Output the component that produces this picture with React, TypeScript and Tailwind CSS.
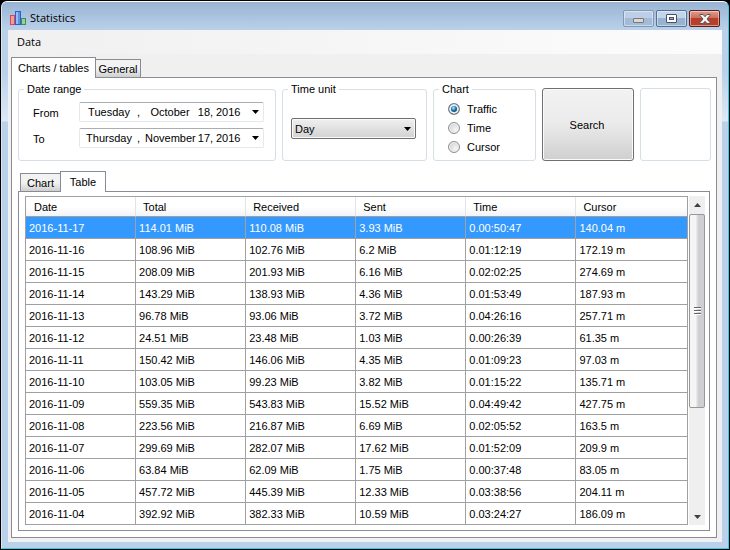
import { useState } from "react";
import type { ReactNode } from "react";

const columns = ["Date", "Total", "Received", "Sent", "Time", "Cursor"];

const rows = [
  ["2016-11-17", "114.01 MiB", "110.08 MiB", "3.93 MiB", "0.00:50:47", "140.04 m"],
  ["2016-11-16", "108.96 MiB", "102.76 MiB", "6.2 MiB", "0.01:12:19", "172.19 m"],
  ["2016-11-15", "208.09 MiB", "201.93 MiB", "6.16 MiB", "0.02:02:25", "274.69 m"],
  ["2016-11-14", "143.29 MiB", "138.93 MiB", "4.36 MiB", "0.01:53:49", "187.93 m"],
  ["2016-11-13", "96.78 MiB", "93.06 MiB", "3.72 MiB", "0.04:26:16", "257.71 m"],
  ["2016-11-12", "24.51 MiB", "23.48 MiB", "1.03 MiB", "0.00:26:39", "61.35 m"],
  ["2016-11-11", "150.42 MiB", "146.06 MiB", "4.35 MiB", "0.01:09:23", "97.03 m"],
  ["2016-11-10", "103.05 MiB", "99.23 MiB", "3.82 MiB", "0.01:15:22", "135.71 m"],
  ["2016-11-09", "559.35 MiB", "543.83 MiB", "15.52 MiB", "0.04:49:42", "427.75 m"],
  ["2016-11-08", "223.56 MiB", "216.87 MiB", "6.69 MiB", "0.02:05:52", "163.5 m"],
  ["2016-11-07", "299.69 MiB", "282.07 MiB", "17.62 MiB", "0.01:52:09", "209.9 m"],
  ["2016-11-06", "63.84 MiB", "62.09 MiB", "1.75 MiB", "0.00:37:48", "83.05 m"],
  ["2016-11-05", "457.72 MiB", "445.39 MiB", "12.33 MiB", "0.03:38:56", "204.11 m"],
  ["2016-11-04", "392.92 MiB", "382.33 MiB", "10.59 MiB", "0.03:24:27", "186.09 m"],
];

function AppIcon() {
  return (
    <svg width="16" height="16" viewBox="0 0 16 16" aria-hidden="true">
      <rect x="0.5" y="5.5" width="4" height="9" fill="#f59a9a" stroke="#e0454e" />
      <rect x="5.5" y="1.5" width="5" height="13" fill="#5c94ec" stroke="#2a62cc" />
      <rect x="6" y="2" width="2" height="12" fill="#94bcf6" />
      <rect x="11.5" y="8.5" width="4" height="6" fill="#94cf9c" stroke="#3f8f4e" />
    </svg>
  );
}

function Arrow({ className = "" }: { className?: string }) {
  return (
    <svg width="7" height="4" viewBox="0 0 7 4" className={className} aria-hidden="true">
      <path d="M0 0h7L3.5 4z" fill="currentColor" />
    </svg>
  );
}

function Group({ title, children }: { title: string; children: ReactNode }) {
  return (
    <fieldset className="h-[79px] min-w-0 rounded-[3px] border border-[#d5dfe5]">
      <legend className="ml-[5px] px-[3px] leading-[14px]">{title}</legend>
      {children}
    </fieldset>
  );
}

interface DateProps {
  id: string;
  label: string;
  weekday: string;
  month: string;
  day: string;
  year: string;
}

function DateRow({ id, label, weekday, month, day, year }: DateProps) {
  return (
    <div className="flex items-center pr-[11px] pl-[14px]">
      <label htmlFor={id} className="w-[46px] pt-px">
        {label}
      </label>
      <button
        id={id}
        type="button"
        className="flex h-5 flex-1 items-center rounded-[2px] border border-[#e3e9ef] border-t-[#abadb3] bg-white pr-[4px] pl-[5px] text-left"
      >
        <span className="w-12 text-center">{weekday}</span>
        <span className="w-3 pl-1">,</span>
        <span className="w-[50px] text-center">{month}</span>
        <span className="w-[21px] text-center">{day},</span>
        <span className="text-right">{year}</span>
        <Arrow className="ml-auto" />
      </button>
    </div>
  );
}

const inactiveTab =
  "h-[18px] border border-b-0 border-[#898c95] bg-linear-to-b from-[#f2f2f2] from-50% to-[#cfcfcf] pt-px leading-4";
const activeTab = "relative z-10 -mb-px border border-b-0 border-[#898c95] bg-white";

const radioClass =
  "size-3 appearance-none rounded-full border border-[#8e8f8f] bg-radial-[at_65%_65%] from-[#f6f6f6] to-[#c4c8cc] shadow-[inset_0_0_0_1px_#f4f4f4] checked:bg-radial-[at_45%_40%] checked:from-[#7fd3f5] checked:from-10% checked:via-[#1a6fae] checked:via-30% checked:to-[#0c2c4c] checked:to-60% checked:border-[#7a8084] checked:shadow-[inset_0_0_0_2px_#e8ecee]";

const captionButton =
  "grid h-[17px] place-items-center rounded-[2px] border shadow-[inset_0_0_0_1px_#ffffff70]";

export default function App() {
  const [unit, setUnit] = useState("Day");
  const [series, setSeries] = useState("Traffic");

  return (
    <div className="flex min-h-screen flex-col bg-black p-px font-['Liberation_Sans',Arial,sans-serif] text-[11px] leading-[14px] text-black">
      <div className="flex flex-1 flex-col rounded-t-[6px] border border-t-white border-r-[#2cd0e8] border-b-[#2cd0e8] border-l-[#d8e6f4] bg-[linear-gradient(to_bottom,#99b4d3_0px,#b9d1ea_28px,#b9d1ea_70px,#dce9f7_119px,#b9d1ea_120px)] px-[6px] pb-[6px]">
        <header className="flex h-7 items-start">
          <div className="flex items-center gap-1 pt-2 pl-[2px]">
            <AppIcon />
            <h1 className="font-['Open_Sans',sans-serif] text-[11px]">Statistics</h1>
          </div>
          <div className="ml-auto flex gap-[2px] pt-2 pr-[2px]">
            <button
              type="button"
              aria-label="Minimize"
              className={`${captionButton} w-[31px] border-[#8198b5] bg-linear-to-b from-[#bccfe6] from-50% to-[#a3bbd8] to-50%`}
            >
              <svg width="11" height="5" viewBox="0 0 11 5" className="mt-1">
                <rect x="0.5" y="0.5" width="10" height="4" rx="0.5" fill="#dcd9cd" stroke="#76767c" />
              </svg>
            </button>
            <button
              type="button"
              aria-label="Maximize"
              className={`${captionButton} w-[31px] border-[#56708f] bg-linear-to-b from-[#c3d5ea] from-50% to-[#98b3d2] to-50%`}
            >
              <svg width="11" height="9" viewBox="0 0 11 9">
                <rect x="0.5" y="0.5" width="10" height="8" rx="0.5" fill="#fff" stroke="#4a5064" />
                <rect x="3.5" y="3.5" width="4" height="2" fill="#8fb0dc" stroke="#4a5064" />
              </svg>
            </button>
            <button
              type="button"
              aria-label="Close"
              className={`${captionButton} w-[31px] border-[#5a1e1e] bg-linear-to-b from-[#dc9c8e] from-0% via-[#cc6a58] via-50% to-[#b8402a] to-50%`}
            >
              <svg width="12" height="10" viewBox="0 0 12 10">
                <path
                  d="M1 .5h3L6 2.700 8 .5h3v1L8 5l3 3.500v1H8L6 7.300 4 9.500H1v-1L4 5 1 1.500z"
                  fill="#f4f4f4"
                  stroke="#54545e"
                />
              </svg>
            </button>
          </div>
        </header>

        <main className="flex flex-1 flex-col bg-[#f0f0f0]">
          <nav className="h-6 bg-linear-to-r from-[#f0f0f0] to-[#fcfcfc] pl-[9px]">
            <button type="button" className="h-6 font-['Open_Sans',sans-serif] text-[11px]">
              Data
            </button>
          </nav>

          <div className="flex flex-1 flex-col px-[3px] pt-[3px] pb-1">
            <div role="tablist" className="flex items-end">
              <button
                type="button"
                role="tab"
                aria-selected="true"
                className={`${activeTab} h-[21px] w-[85px] whitespace-nowrap`}
              >
                Charts / tables
              </button>
              <button type="button" role="tab" aria-selected="false" className={`${inactiveTab} w-[45px] border-l-0`}>
                General
              </button>
            </div>

            <section className="mr-[2px] flex flex-1 flex-col border border-[#898c95] bg-white pt-1 pr-[5px] pb-[6px] pl-[6px]">
              <form
                className="grid grid-cols-[258fr_145fr_103fr_92fr_71fr] gap-[6px]"
                onSubmit={(e) => e.preventDefault()}
              >
                <Group title="Date range">
                  <div className="flex flex-col gap-[6px] pt-[6px]">
                    <DateRow id="from" label="From" weekday="Tuesday" month="October" day="18" year="2016" />
                    <DateRow id="to" label="To" weekday="Thursday" month="November" day="17" year="2016" />
                  </div>
                </Group>

                <Group title="Time unit">
                  <div className="relative mr-[10px] ml-2 mt-[22px]">
                    <select
                      aria-label="Time unit"
                      value={unit}
                      onChange={(e) => setUnit(e.target.value)}
                      className="h-[21px] w-full appearance-none rounded-[2px] border border-[#707070] bg-linear-to-b from-[#f0f0f0] to-[#d2d2d2] pl-[3px] shadow-[inset_0_0_0_1px_#fafafa]"
                    >
                      <option>Day</option>
                      <option>Week</option>
                      <option>Month</option>
                    </select>
                    <Arrow className="pointer-events-none absolute top-[9px] right-[5px]" />
                  </div>
                </Group>

                <Group title="Chart">
                  <div className="flex flex-col gap-[5px] pt-[6px] pl-[14px]">
                    {["Traffic", "Time", "Cursor"].map((name) => (
                      <label key={name} className="flex h-[14px] items-center gap-[7px]">
                        <input
                          type="radio"
                          name="series"
                          checked={series === name}
                          onChange={() => setSeries(name)}
                          className={radioClass}
                        />
                        {name}
                      </label>
                    ))}
                  </div>
                </Group>

                <button
                  type="submit"
                  className="mt-[6px] rounded-[3px] border border-[#707070] bg-linear-to-b from-[#f2f2f2] from-0% via-[#ebebeb] via-48% to-[#cfcfcf] pr-[2px] shadow-[inset_0_0_0_1px_#fafafa]"
                >
                  Search
                </button>

                <div className="mt-[6px] rounded-[3px] border border-[#d5dfe5]" />
              </form>

              <div role="tablist" className="mt-[10px] flex items-end pl-[2px]">
                <button type="button" role="tab" aria-selected="false" className={`${inactiveTab} w-10 border-r-0`}>
                  Chart
                </button>
                <button type="button" role="tab" aria-selected="true" className={`${activeTab} h-[21px] w-[46px]`}>
                  Table
                </button>
              </div>

              <section className="mr-px flex flex-1 items-stretch gap-px border border-[#898c95] pt-1 pr-1 pb-[5px] pl-[6px]">
                <div className="min-w-0 flex-1 border-t border-l border-[#a0a0a0]">
                  <table className="w-full table-fixed border-separate border-spacing-0">
                    <colgroup>
                      <col span={5} className="w-[16.63%]" />
                      <col />
                    </colgroup>
                    <thead>
                      <tr className="h-5">
                        {columns.map((name) => (
                          <th
                            key={name}
                            scope="col"
                            className="border-r border-b border-r-[#e2e3e5] border-b-[#a0a0a0] bg-linear-to-b from-white from-50% to-[#f2f3f5] p-0 pt-px pl-[7px] text-left font-normal first:pl-2 last:border-r-[#a0a0a0]"
                          >
                            {name}
                          </th>
                        ))}
                      </tr>
                    </thead>
                    <tbody>
                      {rows.map((row, i) => (
                        <tr key={row[0]} className={i === 0 ? "h-[22px] bg-[#3399ff] text-white" : "h-[22px]"}>
                          {row.map((cell) => (
                            <td key={cell} className="border-r border-b border-[#a0a0a0] p-0 pt-px pl-[3px]">
                              {cell}
                            </td>
                          ))}
                        </tr>
                      ))}
                    </tbody>
                  </table>
                </div>

                <div className="flex w-4 flex-col bg-[#efefef] text-[#404040]">
                  <button type="button" aria-label="Scroll up" className="grid h-[18px] place-items-center">
                    <Arrow className="rotate-180" />
                  </button>
                  <div className="grid h-[194px] place-items-center rounded-[2px] border border-[#979797] bg-linear-to-r from-[#f5f5f5] from-40% to-[#cfcfd3] to-60%">
                    <svg width="7" height="8" viewBox="0 0 7 8" aria-hidden="true">
                      <path d="M0 .5h7M0 3.500h7M0 6.500h7" stroke="#666" />
                      <path d="M0 1.500h7M0 4.500h7M0 7.500h7" stroke="#fff" />
                    </svg>
                  </div>
                  <button type="button" aria-label="Scroll down" className="mt-auto grid h-[17px] place-items-center">
                    <Arrow />
                  </button>
                </div>
              </section>
            </section>
          </div>
        </main>
      </div>
    </div>
  );
}
